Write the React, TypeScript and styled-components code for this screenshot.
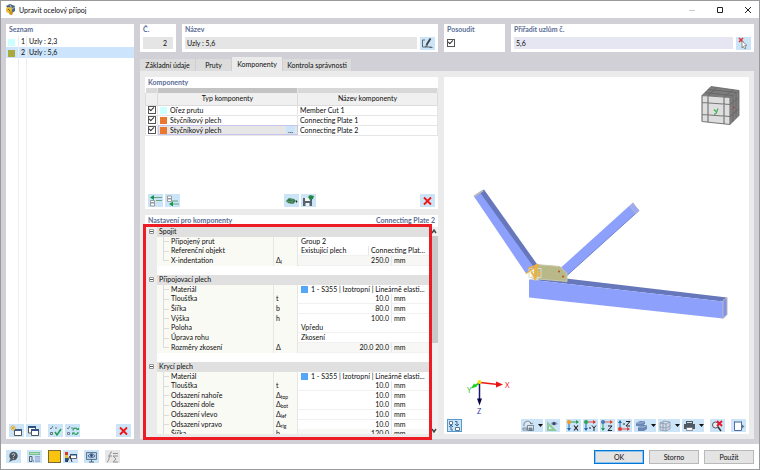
import React from "react";
import styled, { createGlobalStyle, css } from "styled-components";

const GlobalStyle = createGlobalStyle`
  *, *::before, *::after { box-sizing: border-box; }
  html, body, #root { height: 100%; }
  body {
    margin: 0;
    font-family: Lato, "Open Sans", "Noto Sans", sans-serif;
    font-size: 7px;
    line-height: 9px;
    color: #0c0c0c;
    background: #fff;
  }
  button, input { font: inherit; color: inherit; }
`;

const Window = styled.div`
  display: flex;
  flex-direction: column;
  min-height: 100vh;
  border: 1px solid #9a9a9c;
  background: #fff;
`;

const TitleBar = styled.header`
  display: flex;
  align-items: center;
  height: 17px;
  padding: 0 7px 0 4px;
  gap: 3px;
`;

const Title = styled.h1`
  flex: 1;
  margin: 0;
  font-size: 7px;
  font-weight: 400;
  line-height: 12px;
`;

const WindowControls = styled.div`
  display: flex;
  gap: 20px;
`;

const WindowButton = styled.button`
  display: flex;
  width: 8px;
  height: 8px;
  padding: 0;
  border: 0;
  background: none;
`;

const Body = styled.div`
  display: flex;
  flex: 1;
  gap: 6px;
  padding: 6px 5px 5px;
  background: #d1d0d6;
`;

const Panel = styled.section`
  display: flex;
  flex-direction: column;
  min-width: 0;
  background: #fff;
`;

const Sidebar = styled(Panel)`
  flex: 0 0 128px;
`;

const Heading = styled.h2`
  display: flex;
  justify-content: space-between;
  margin: 0;
  padding: 1px 3px;
  font-size: 7px;
  font-weight: 700;
  line-height: 9px;
  color: #5a6c95;
`;

const NodeTable = styled.table`
  width: 100%;
  margin-top: 1px;
  table-layout: fixed;
  border-spacing: 0;
`;

const NodeRow = styled.tr<{ $selected?: boolean }>`
  height: 11px;
  background: ${(p) => (p.$selected ? "#cce5fd" : "#fff")};
`;

const NodeCell = styled.td<{ $width?: number; $right?: boolean }>`
  width: ${(p) => (p.$width ? `${p.$width}px` : "auto")};
  padding: 0 ${(p) => (p.$right ? 1 : 2)}px;
  border-right: ${(p) => (p.$width ? "1px solid #eeeef0" : "0")};
  text-align: ${(p) => (p.$right ? "right" : "left")};
  white-space: nowrap;
`;

const ColumnGuides = styled.div`
  display: grid;
  flex: 1;
  grid-template-columns: 13px 8px 1fr;
`;

const Guide = styled.span`
  border-right: 1px solid #eeeef0;
  &:last-child { border: 0; }
`;

const Swatch = styled.span<{ $color: string }>`
  display: inline-block;
  flex: none;
  width: 7px;
  height: 7px;
  background: ${(p) => p.$color};
  vertical-align: middle;
`;

const Toolbar = styled.div`
  display: flex;
  align-items: center;
  gap: 2px;
  padding: 2px 3px;
`;

const Spacer = styled.span<{ $width?: number }>`
  flex: ${(p) => (p.$width ? `0 0 ${p.$width}px` : "1")};
`;

const ToolButton = styled.button<{ $pressed?: boolean; $disabled?: boolean; $menu?: boolean }>`
  display: flex;
  flex: none;
  align-items: center;
  justify-content: center;
  width: ${(p) => (p.$menu ? 22 : 15)}px;
  height: 13px;
  padding: 0;
  gap: 3px;
  border: ${(p) => (p.$pressed ? "1px solid #5599cc" : "0")};
  background: ${(p) => (p.$disabled ? "#e7e7e7" : "#cce4f7")};
`;

const Main = styled.main`
  display: flex;
  flex: 1;
  flex-direction: column;
  min-width: 0;
`;

const Fields = styled.div`
  display: grid;
  grid-template-columns: 36px 256fr 61px 243fr;
  gap: 6px;
`;

const Field = styled(Panel)`
  height: 28px;
`;

const FieldLabel = styled.label`
  padding: 1px 3px;
  font-weight: 700;
  color: #5a6c95;
`;

const FieldRow = styled.div`
  display: flex;
  align-items: center;
  gap: 3px;
  height: 14px;
  margin-top: 1px;
  padding: 0 3px;
`;

const TextInput = styled.input<{ $tint?: boolean; $right?: boolean }>`
  flex: 1;
  min-width: 0;
  width: 100%;
  height: 12px;
  padding: 0 ${(p) => (p.$right ? 6 : 2)}px;
  border: 0;
  background: ${(p) => (p.$tint ? "#e6e6f2" : "#e5e5e5")};
  text-align: ${(p) => (p.$right ? "right" : "left")};
`;

const Check = styled.input`
  appearance: none;
  display: block;
  width: 8px;
  height: 8px;
  margin: 0;
  border: 1px solid #555;
  background: #fff;
  &:checked::after {
    content: "";
    display: block;
    width: 5px;
    height: 3px;
    border: solid #333;
    border-width: 0 0 1px 1px;
    transform: rotate(-45deg);
  }
`;

const Tabs = styled.div`
  display: flex;
  align-items: flex-end;
  height: 19px;
`;

const Tab = styled.button<{ $active?: boolean; $width: number }>`
  width: ${(p) => p.$width}px;
  height: ${(p) => (p.$active ? 14 : 12)}px;
  padding: 0;
  border: 0;
  border-right: 1px solid #cfcfcf;
  background: ${(p) => (p.$active ? "#ebebeb" : "#dcdcdc")};
  white-space: nowrap;
`;

const TabPage = styled.div`
  display: grid;
  flex: 1;
  grid-template-columns: 293fr 305fr;
  gap: 6px;
  padding: 6px 5px 5px;
  background: #ebebeb;
`;

const LeftColumn = styled.div`
  display: flex;
  flex-direction: column;
  gap: 6px;
  min-width: 0;
`;

const ComponentsPanel = styled(Panel)`
  height: 132px;
`;

const ComponentTable = styled.table`
  width: 100%;
  table-layout: fixed;
  border-collapse: collapse;
`;

const HeadStrip = styled.th<{ $dark?: boolean; $width?: number }>`
  width: ${(p) => (p.$width ? `${p.$width}px` : "auto")};
  height: 5px;
  padding: 0;
  border-right: 1px solid #e6e6e6;
  background: ${(p) => (p.$dark ? "#c4c4c4" : "#d8d8d8")};
`;

const HeadCell = styled.th`
  height: 12px;
  padding: 0;
  border: 1px solid #dcdcdc;
  border-top: 0;
  background: #f0f0f0;
  font-weight: 400;
`;

const ComponentBody = styled.tbody`
  tr { height: 10px; }
  td { height: 10px; padding: 0 2px; line-height: 8px; border: 1px solid #e6e6e6; white-space: nowrap; }
`;

const TypeCell = styled.td<{ $selected?: boolean }>`
  ${(p) => p.$selected && css`background: #e6e6e6; outline: 1px solid #c9c4ea; outline-offset: -1px;`}
`;

const TypeContent = styled.div`
  display: flex;
  align-items: center;
  gap: 3px;
`;

const MoreButton = styled.button`
  width: 9px;
  height: 8px;
  margin-left: auto;
  padding: 0;
  border: 0;
  line-height: 4px;
  background: #cce4f7;
`;

const SettingsPanel = styled(Panel)`
  position: relative;
  flex: 1;
`;

const Highlight = styled.div`
  position: absolute;
  inset: 9px 6px -6px -2px;
  border: 3px solid #ed1c24;
  pointer-events: none;
`;

const SettingsView = styled.div`
  display: grid;
  flex: 1 1 0;
  grid-template-columns: 1fr 8px;
  height: 208px;
  margin-top: 1px;
  overflow: hidden;
`;

const SettingsScroll = styled.div`
  height: 208px;
  overflow: hidden;
`;

const PropertyTable = styled.table`
  display: block;
  height: 212px;
`;

const PropertyBody = styled.tbody`
  display: grid;
  grid-template-rows: repeat(22, 1fr);
  height: 100%;
`;

const PropertyRow = styled.tr<{ $group?: boolean }>`
  display: grid;
  grid-template-columns: ${(p) => (p.$group ? "12px 1fr" : "12px 117px 24px 1fr")};
  min-height: 0;
`;

const GutterCell = styled.td`
  display: flex;
  align-items: center;
  justify-content: center;
  padding: 0;
  background: #ebebeb;
`;

const GroupCell = styled.th`
  padding: 0 2px;
  font-weight: 400;
  text-align: left;
  background: #e0e0e0;
`;

const LabelCell = styled.th<{ $last?: boolean }>`
  display: flex;
  padding: 0 0 0 6px;
  gap: 2px;
  font-weight: 400;
  white-space: nowrap;
  border-right: 1px solid #e6e6e6;
  background: #fafaf5;
  &::before {
    content: "";
    width: 6px;
    height: ${(p) => (p.$last ? "50%" : "100%")};
    border-left: 1px solid #dcdcdc;
    background: linear-gradient(#dcdcdc, #dcdcdc) 0 ${(p) => (p.$last ? "100%" : "50%")} / 6px 1px no-repeat;
  }
`;

const SymbolCell = styled.td`
  padding: 0 2px;
  border-right: 1px solid #e6e6e6;
  background: #fafaf5;
  white-space: nowrap;
`;

const Sub = styled.sub`
  font-size: 5px;
  line-height: 1px;
  vertical-align: -1px;
`;

const ValueCell = styled.td<{ $columns?: string; $shade?: boolean }>`
  display: grid;
  grid-template-columns: ${(p) => p.$columns ?? "1fr"};
  min-width: 0;
  padding: 0 0 0 1px;
  border-bottom: 1px solid #f1f1f1;
  background: ${(p) => (p.$shade ? "#f7f7f5" : "#fff")};
`;

const ValuePart = styled.span<{ $right?: boolean; $unit?: boolean }>`
  padding: 0 2px;
  overflow: hidden;
  text-overflow: ellipsis;
  text-align: ${(p) => (p.$right ? "right" : "left")};
  white-space: nowrap;
  border-left: ${(p) => (p.$unit ? "1px solid #e6e6e6" : "0")};
`;

const MaterialValue = styled.span`
  display: flex;
  align-items: center;
  gap: 3px;
  padding: 0 2px;
  white-space: nowrap;
`;

const ScrollBar = styled.div`
  display: flex;
  flex-direction: column;
  justify-content: space-between;
  align-items: flex-end;
  background: #f0f0f0;
`;

const ScrollThumb = styled.div`
  width: 6px;
  height: 107px;
  margin-bottom: auto;
  background: #c9c9c9;
`;

const Viewer = styled(Panel)``;

const Scene = styled.svg`
  display: block;
  flex: 1 1 0;
  width: 100%;
  min-height: 0;
`;

const Footer = styled.footer`
  display: flex;
  align-items: center;
  gap: 5px;
  height: 25px;
  padding: 0 5px;
`;

const IconStrip = styled.div`
  display: flex;
  flex: 1;
  gap: 2px;
`;

const ColorButton = styled.button`
  width: 13px;
  height: 13px;
  padding: 0;
  border: 1px solid #75683a;
  background: #f9c30e;
`;

const DialogButton = styled.button<{ $primary?: boolean }>`
  width: 50px;
  height: 14px;
  padding: 0;
  border: 1px solid ${(p) => (p.$primary ? "#0078d7" : "#b9b9b9")};
  outline: ${(p) => (p.$primary ? "1px solid #8dc0ea" : "0")};
  outline-offset: -2px;
  background: #e4e4e4;
  line-height: 10px;
`;

const iconShapes = {
  edit: <g fill="none" stroke="#5b6870"><path d="M4 3H1.500v7h9M8.500 10.500h3" /><path d="M9.500 1.500 5.500 8" stroke="#3b4147" strokeWidth="1.800" /><path d="m4.500 10 1-2 1 .8Z" /></g>,
  pick: <g><path d="m2 1 4 4M6 1 2 5" stroke="#e23434" strokeWidth="1.500" /><path d="m5 4 5 4.500-2.400.2 1.400 2.500-1.500.6-1.200-2.500L5 11Z" fill="#fff" stroke="#777" strokeWidth=".8" /></g>,
  newItem: <g><path d="M4.500 4.500h7v6h-7z" fill="#fff" stroke="#555" /><path d="M4 4h8v2H4z" fill="#3f608b" /><path d="M3 0v6M0 3h6M1 1l4 4M5 1 1 5" stroke="#e0b23b" /></g>,
  copyItem: <g fill="#fff" stroke="#555"><path d="M1.500 2v6h7V2Z" /><path d="M1 2h8" stroke="#31547e" strokeWidth="2" /><path d="M4.500 5v5.500h7V5Z" /><path d="M4 5h8" stroke="#31547e" strokeWidth="2" /></g>,
  checkAll: <g fill="none" stroke="#555" strokeWidth=".8"><path d="m1 3 1 1 2-3M1.500 7.500h2v2h-2zM6 3h2" /><path d="m6 7 2 3 4-6" stroke="#1a9e50" strokeWidth="1.500" /></g>,
  checkSwap: <g fill="none" stroke="#667" strokeWidth=".8"><path d="m1 3 1 1 2-3M1.500 7.500h2v2h-2zM5 3h2" /><path d="M7 5.500c0-3 4-3 4.500-.5M12 7c0 3-4 3-4.500.5" stroke="#2ba35c" strokeWidth="1.200" /><path d="M10 5h3V2.500ZM9 7.500H6V10Z" fill="#2ba35c" stroke="none" /></g>,
  remove: <path d="m3 2.500 7 7M10 2.500l-7 7" stroke="#ed1515" strokeWidth="1.800" />,
  insertAbove: <g><path d="M5 2.500h8M7 5.500h6" stroke="#66a782" /><path d="m1 2.500 4-2.500v5Z" fill="#16944c" /><path d="M1.500 5.500h4v2h-4zM1.500 8h4v3h-4z" fill="#fff" stroke="#888" strokeWidth=".8" /></g>,
  insertBelow: <g><path d="M7 9h6M6 6h6" stroke="#66a782" /><path d="m3 9 4-2.500v5Z" fill="#16944c" /><path d="M1.500 1h4v2.500h-4zM1.500 4h4v2.500h-4z" fill="#fff" stroke="#888" strokeWidth=".8" /></g>,
  component: <g><path d="m1 6 3-3 5 1 2 2-3 3-5-1Z" fill="#39734b" /><path d="m4 3 4 2-1 4M1 6l6 1" stroke="#68b17d" strokeWidth=".7" fill="none" /><path d="m11 5 1.500 1.500L11 8Z" fill="#222" /></g>,
  saveComponent: <g><path d="M1 3h9v8H1Z" fill="#59636b" /><path d="M3 3h5v3H3zM3.500 8h4v3h-4z" fill="#eef5fa" /><path d="m6 2 2-2 4 1-1 3-3 1Z" fill="#248747" /></g>,
  help: <g><circle cx="6.500" cy="5" r="4.200" fill="#4e565d" /><path d="M3.500 8 2 11l4-2" fill="#4e565d" /><path d="M5 4c.2-2 3.200-1.500 2.800 0-.3 1-1.500 1-1.500 2.200m0 1v1" fill="none" stroke="#d7e7f3" strokeWidth=".9" /></g>,
  units: <g><path d="M1 1h11v3H1z" fill="#77c58d" /><path d="M2 2.500h9" stroke="#b6debf" /><path d="M7 5h5v6H7z" fill="#9caddb" /><path d="M7 7h5M7 9h5" stroke="#d5dcf0" strokeWidth=".8" /><path d="M1.500 5.500h2.500v5H1.500zM5.500 9.500v1" stroke="#52606c" fill="none" /></g>,
  colors: <g><path d="M1 1h3v3H1z" fill="#d4372c" /><path d="M1 4h3v3H1z" fill="#efbd2e" /><path d="M1 7h3v4H1z" fill="#275184" /><path d="M6.500 3.500h6v4h-6z" fill="#fff" stroke="#667" /><path d="M6 3h7v1.500H6z" fill="#31547e" /><path d="m3 11 3-6 2 6" stroke="#333" fill="none" /></g>,
  monitor: <g><path d="M1.500 1.500h10v7h-10z" fill="#b9d3ec" stroke="#60798e" /><path d="M3 5c2-3 5-3 7 0-2 2-5 2-7 0M4 11h5M6.500 8v3" fill="none" stroke="#496580" /><circle cx="6.500" cy="4.500" r="1.400" fill="#294d78" /></g>,
  formula: <g fill="none" stroke="#929292"><path d="M6 1C3 0 4 10 1 11M2 5h4M7 2.500h5M12 5H7l3 3-3 3h5" /></g>,
  views: <g><path d="M1.500 1.500h3v3h-3zM7.500 7.500h4v3h-4z" fill="#fff" stroke="#5a7993" /><path d="M7 1.500h2v4M5 10H3V6M7 4l2 2 2-2M1 7l2-2 2 2" fill="none" stroke="#336a9c" /></g>,
  rotateView: <g fill="#dfe6ee" stroke="#657483" strokeWidth=".8"><path d="M2 6C1 0 9 0 9 4M8 2l1 2 2-1M1 8h4v2H1zM5.500 5.500h6v5h-6z" /><path d="M7 8h3v2.500h-3z" fill="#798da0" /></g>,
  measure: <g><path d="M1 1v10h10Z" fill="#8dcb98" /><path d="M3 6v3h3Z" fill="#e4f2e9" /><path d="M4.500 3.500C6 1 10 1 12 3.500 10 6 6 6 4.500 3.500" fill="#9daac5" /><circle cx="8" cy="3.500" r="1.600" fill="#34436d" /></g>,
  axisX: <g><path d="M2 2v8" stroke="#2169ad" /><path d="M2 2h9" stroke="#30a45b" /><circle cx="2" cy="2" r="2" fill="#ef9e22" /><path d="m9 0 3 2-3 2Z" fill="#239b52" /><path d="M0 8h4l-2 3Z" fill="#2169ad" /><path d="m7 5.500 4 5M11 5.500l-4 5" stroke="#222" strokeWidth="1.200" /></g>,
  axisY: <g><path d="M2 2v8" stroke="#2169ad" /><path d="M2 2h9" stroke="#de4b3e" /><circle cx="2" cy="2" r="2" fill="#2da455" /><path d="m9 0 3 2-3 2Z" fill="#dc392f" /><path d="M0 8h4l-2 3Z" fill="#2169ad" /><path d="M5 8h2m1-2.500 2 2.500 2-2.500m-2 2.500v3" stroke="#222" fill="none" /></g>,
  axisZ: <g><path d="M2 2v8" stroke="#30a45b" /><path d="M2 2h9" stroke="#de6944" /><circle cx="2" cy="2" r="2" fill="#4b79ba" /><path d="m9 0 3 2-3 2Z" fill="#df4939" /><path d="M0 8h4l-2 3Z" fill="#239b52" /><path d="M7 6h4l-4 4.500h4" stroke="#222" fill="none" /></g>,
  axisZneg: <g><path d="M2 9V2" stroke="#2169ad" /><path d="M2 9h9" stroke="#de4b3e" /><circle cx="2" cy="9" r="2" fill="#e33e34" /><path d="m9 7 3 2-3 2Z" fill="#e33e34" /><path d="m0 3 2-3 2 3Z" fill="#2169ad" /><path d="M5 4h2m1-2.500h4L8 6h4" stroke="#222" fill="none" /></g>,
  surface: <g><path d="m1 3 4-2h5v3l-3 2H1ZM3 7l4-2h5v4l-3 2H3Z" fill="#6d87b5" /><path d="m1 3h6l3-2M3 7h6l3-2" stroke="#a3bbda" fill="none" /></g>,
  box: <g fill="#d1d7e3" stroke="#8995a8" strokeWidth=".8"><path d="m1 3 4-2 6 1v7l-4 2-6-1Zm0 0 6 1 4-2M7 4v7M4 2v8M1 7l6 1 4-2" /></g>,
  print: <g><path d="M3 1h7v4H3zM1 4h11v5H1z" fill="#4e5961" /><path d="M3.500 7.500h6v3h-6z" fill="#fff" stroke="#667" strokeWidth=".7" /><path d="M4 2.500h5" stroke="#cfdae1" /></g>,
  clear: <g><circle cx="4.500" cy="5" r="3" fill="#e7edf1" stroke="#555" /><path d="m7 7 3 4" stroke="#333" strokeWidth="1.500" /><path d="m6 1 5 5m0-5L6 6" stroke="#e7192c" strokeWidth="1.800" /></g>,
  exportPage: <g><path d="M2.500 1.500h7v9h-7z" fill="#fff" stroke="#536bad" /><path d="M3 2h6" stroke="#95abc4" strokeWidth="2" /><path d="m9.500 4 3 2.500-3 2.500Z" fill="#5e7892" /></g>,
};

type IconName = keyof typeof iconShapes;

const Icon = ({ name }: { name: IconName }) => (
  <svg width="13" height="12" viewBox="0 0 13 12" fill="none" aria-hidden="true">{iconShapes[name]}</svg>
);

const Caret = () => (
  <svg width="5" height="3" viewBox="0 0 5 3" aria-hidden="true"><path d="M0 0h5L2.500 3Z" fill="#111" /></svg>
);

const Tool = ({ icon, label, menu, pressed, disabled }: { icon: IconName; label: string; menu?: boolean; pressed?: boolean; disabled?: boolean }) => (
  <ToolButton type="button" aria-label={label} $menu={menu} $pressed={pressed} $disabled={disabled} disabled={disabled}>
    <Icon name={icon} />{menu && <Caret />}
  </ToolButton>
);

type Property = {
  label: string;
  symbol?: string;
  sub?: string;
  value: string;
  unit?: string;
  second?: string;
  material?: boolean;
  shade?: boolean;
};

const steel = { label: "Materiál", value: "1 - S355 | Izotropní | Lineárně elasti...", material: true };

const groups: { name: string; rows: Property[] }[] = [
  { name: "Spojit", rows: [
    { label: "Připojený prut", value: "Group 2" },
    { label: "Referenční objekt", value: "Existující plech", second: "Connecting Plat..." },
    { label: "X-indentation", symbol: "Δ", sub: "i", value: "250.0", unit: "mm", shade: true },
  ] },
  { name: "Připojovací plech", rows: [
    steel,
    { label: "Tloušťka", symbol: "t", value: "10.0", unit: "mm" },
    { label: "Šířka", symbol: "b", value: "80.0", unit: "mm" },
    { label: "Výška", symbol: "h", value: "100.0", unit: "mm" },
    { label: "Poloha", value: "Vpředu" },
    { label: "Úprava rohu", value: "Zkosení" },
    { label: "Rozměry zkosení", symbol: "Δ", value: "20.0 20.0", unit: "mm", shade: true },
  ] },
  { name: "Krycí plech", rows: [
    steel,
    { label: "Tloušťka", symbol: "t", value: "10.0", unit: "mm" },
    { label: "Odsazení nahoře", symbol: "Δ", sub: "top", value: "10.0", unit: "mm" },
    { label: "Odsazení dole", symbol: "Δ", sub: "bot", value: "10.0", unit: "mm" },
    { label: "Odsazení vlevo", symbol: "Δ", sub: "lef", value: "10.0", unit: "mm" },
    { label: "Odsazení vpravo", symbol: "Δ", sub: "rig", value: "10.0", unit: "mm" },
    { label: "Šířka", symbol: "b", value: "120.0", unit: "mm", shade: true },
  ] },
];

const PropertyValue = ({ row }: { row: Property }) => {
  if (row.material) {
    return <ValueCell><MaterialValue><Swatch $color="#53a6f8" />{row.value}</MaterialValue></ValueCell>;
  }
  if (row.unit) {
    return (
      <ValueCell $columns="1fr 39px" $shade={row.shade}>
        <ValuePart $right>{row.value}</ValuePart><ValuePart $unit>{row.unit}</ValuePart>
      </ValueCell>
    );
  }
  if (row.second) {
    return <ValueCell $columns="1fr 62px"><ValuePart>{row.value}</ValuePart><ValuePart $unit>{row.second}</ValuePart></ValueCell>;
  }
  return <ValueCell><ValuePart>{row.value}</ValuePart></ValueCell>;
};

const Minus = () => (
  <svg width="5" height="5" viewBox="0 0 5 5" aria-hidden="true">
    <path d="M.5.500h4v4h-4z" fill="#fff" stroke="#999" /><path d="M1 2.500h3" stroke="#555" />
  </svg>
);

const Settings = () => (
  <PropertyTable>
    <PropertyBody>
      {groups.map((group, g) => (
        <React.Fragment key={group.name}>
          <PropertyRow $group><GutterCell><Minus /></GutterCell><GroupCell>{group.name}</GroupCell></PropertyRow>
          {group.rows.map((row, i) => (
            <PropertyRow key={row.label}>
              <GutterCell />
              <LabelCell $last={g < 2 && i === group.rows.length - 1}>{row.label}</LabelCell>
              <SymbolCell>{row.symbol}{row.sub && <Sub>{row.sub}</Sub>}</SymbolCell>
              <PropertyValue row={row} />
            </PropertyRow>
          ))}
          {g < 2 && <PropertyRow $group><GutterCell /><td /></PropertyRow>}
        </React.Fragment>
      ))}
    </PropertyBody>
  </PropertyTable>
);

const components = [
  { color: "#ccffff", type: "Ořez prutu", name: "Member Cut 1" },
  { color: "#e97730", type: "Styčníkový plech", name: "Connecting Plate 1" },
  { color: "#e97730", type: "Styčníkový plech", name: "Connecting Plate 2", selected: true },
];

const Model = () => (
  <Scene viewBox="444 77 305 339" role="img" aria-label="3D model">
    <g strokeLinejoin="round">
      <path d="m474 196 9-6 54 76-11 7Z" fill="#8da1fc" />
      <path d="m480 192 4-3 54 76-4 2Z" fill="#6677bc" />
      <path d="m474 196 9-6" stroke="#b9b9b9" strokeWidth="2" />
      <path d="m561 267 72-65 6 8-72 65Z" fill="#8da1fc" />
      <path d="m567 275 72-65" stroke="#7082d1" />
      <path d="m633 203 6 7-3 3-6-7Z" fill="#99aafb" stroke="#b9b9bf" />
      <path d="m529 279 37-1 161 19-4 4Z" fill="#6677bc" />
      <path d="m529 279 194 22v17l-194-21Z" fill="#8da1fc" />
      <path d="m723 300 4-3v17l-4 4Z" fill="#8092e6" stroke="#b9b9bd" />
      <path d="m536 264 24 2 7 7v8l-34-3Z" fill="#b9b888" stroke="#c9c9ac" />
      <circle cx="559" cy="271" r="1" fill="#b84b17" /><circle cx="563" cy="276" r="1" fill="#b84b17" />
      <path d="M529 268h12v9h-12zM532 271h6v8h-6z" fill="none" stroke="#dedbc5" />
      <path d="m528 268 10-4-2 7 4 2-5 4-4-6M526 273l9-6v13" fill="none" stroke="#edb13a" strokeWidth="1.500" />
    </g>
    <g strokeLinejoin="round">
      <path d="m702 95 9-9 28 4-9 7Z" fill="#7d7d7d" /><path d="m730 97 9-7v25l-9 9Z" fill="#827f7f" />
      <path d="m702 95 28 2v27l-28-3Z" fill="#dedede" />
      <path d="M702 95v26M708 96v26M724 97v26M730 97v27M702 95l28 2M702 102l28 2M702 114l28 2M702 121l28 3" stroke="#777" strokeWidth="1.200" />
      <path d="m705 92 28 3M708 89l28 3M708 95l9-8M724 97l9-8M733 95v26M736 92v25M730 104l9-7M730 116l9-8M702 95l9-9 28 4-9 7M739 90v25l-9 9" fill="none" stroke="#626262" strokeWidth=".8" />
      <path d="m714 109 2 2m2-3-2 5-2 1" fill="none" stroke="#42ad50" strokeWidth="1.200" />
      <circle cx="734" cy="107" r="1" fill="#9b4d4d" />
    </g>
    <path d="m480 382 18 2" stroke="#ef1717" strokeWidth="1.500" /><path d="m496 381 7 3-7 3Z" fill="#e11" />
    <path d="m480 382-6 4" stroke="#15d21d" strokeWidth="2" /><path d="m471 388 3-5 3 3Z" fill="#15d21d" />
    <path d="M479.500 382v17" stroke="#17176d" strokeWidth="1.500" /><path d="M477 398h5l-2.500 7Z" fill="#070747" />
    <circle cx="479.500" cy="381.500" r="2" fill="#f4df12" />
    <text x="505" y="387" fontSize="7" fill="#f02020">X</text>
    <text x="467" y="392" fontSize="7" fill="#20b52a">Y</text>
    <text x="477" y="413" fontSize="7" fill="#343497">Z</text>
  </Scene>
);

const AppLogo = () => (
  <svg width="11" height="11" viewBox="0 0 11 11" aria-hidden="true">
    <path d="m1 2 4-2 5 2v5L7 9 3 5Z" fill="#4e6681" /><path d="m5 1 2 4 3-2" stroke="#a8bdcb" fill="none" />
    <circle cx="4" cy="6" r="3" fill="#e7ba31" /><circle cx="6" cy="9" r="2" fill="#cc9720" /><path d="m3 5 2 2" stroke="#775e2d" />
  </svg>
);

export default function App() {
  return (
    <Window>
      <GlobalStyle />
      <TitleBar>
        <AppLogo />
        <Title>Upravit ocelový přípoj</Title>
        <WindowControls>
          <WindowButton type="button" aria-label="Minimize"><svg width="8" height="8"><path d="M1 4.500h6" stroke="#ccc" /></svg></WindowButton>
          <WindowButton type="button" aria-label="Maximize"><svg width="8" height="8"><path d="M1.500 1.500h5v5h-5z" fill="none" stroke="#222" /></svg></WindowButton>
          <WindowButton type="button" aria-label="Close"><svg width="8" height="8"><path d="m1 1 6 6m0-6L1 7" stroke="#222" /></svg></WindowButton>
        </WindowControls>
      </TitleBar>

      <Body>
        <Sidebar>
          <Heading>Seznam</Heading>
          <NodeTable>
            <tbody>
              <NodeRow><NodeCell $width={13}><Swatch $color="#ccffff" /></NodeCell><NodeCell $width={8} $right>1</NodeCell><NodeCell>Uzly : 2,3</NodeCell></NodeRow>
              <NodeRow $selected><NodeCell $width={13}><Swatch $color="#a9a93d" /></NodeCell><NodeCell $width={8} $right>2</NodeCell><NodeCell>Uzly : 5,6</NodeCell></NodeRow>
            </tbody>
          </NodeTable>
          <ColumnGuides><Guide /><Guide /><Guide /></ColumnGuides>
          <Toolbar>
            <Tool icon="newItem" label="Nový" /><Tool icon="copyItem" label="Kopírovat" /><Spacer $width={3} />
            <Tool icon="checkAll" label="Vybrat vše" /><Tool icon="checkSwap" label="Obrátit výběr" /><Spacer />
            <Tool icon="remove" label="Smazat" />
          </Toolbar>
        </Sidebar>

        <Main>
          <Fields>
            <Field><FieldLabel htmlFor="number">Č.</FieldLabel><FieldRow><TextInput id="number" defaultValue="2" $right /></FieldRow></Field>
            <Field><FieldLabel htmlFor="name">Název</FieldLabel><FieldRow><TextInput id="name" defaultValue="Uzly : 5,6" /><Tool icon="edit" label="Upravit název" /></FieldRow></Field>
            <Field><FieldLabel htmlFor="design">Posoudit</FieldLabel><FieldRow><Check id="design" type="checkbox" defaultChecked /></FieldRow></Field>
            <Field><FieldLabel htmlFor="nodes">Přiřadit uzlům č.</FieldLabel><FieldRow><TextInput id="nodes" defaultValue="5,6" $tint /><Tool icon="pick" label="Vybrat uzly" /></FieldRow></Field>
          </Fields>

          <Tabs role="tablist">
            <Tab type="button" role="tab" $width={56}>Základní údaje</Tab>
            <Tab type="button" role="tab" $width={36}>Pruty</Tab>
            <Tab type="button" role="tab" aria-selected $width={51} $active>Komponenty</Tab>
            <Tab type="button" role="tab" $width={69}>Kontrola správnosti</Tab>
          </Tabs>

          <TabPage>
            <LeftColumn>
              <ComponentsPanel>
                <Heading>Komponenty</Heading>
                <ComponentTable>
                  <thead>
                    <tr><HeadStrip $width={12} /><HeadStrip $dark /><HeadStrip /></tr>
                    <tr><HeadCell /><HeadCell>Typ komponenty</HeadCell><HeadCell>Název komponenty</HeadCell></tr>
                  </thead>
                  <ComponentBody>
                    {components.map((c) => (
                      <tr key={c.name}>
                        <td><Check type="checkbox" defaultChecked aria-label={c.name} /></td>
                        <TypeCell $selected={c.selected}>
                          <TypeContent><Swatch $color={c.color} />{c.type}{c.selected && <MoreButton type="button">...</MoreButton>}</TypeContent>
                        </TypeCell>
                        <td>{c.name}</td>
                      </tr>
                    ))}
                  </ComponentBody>
                </ComponentTable>
                <Spacer />
                <Toolbar>
                  <Tool icon="insertAbove" label="Vložit nad" /><Tool icon="insertBelow" label="Vložit pod" /><Spacer />
                  <Tool icon="component" label="Knihovna" /><Tool icon="saveComponent" label="Uložit" /><Spacer />
                  <Tool icon="remove" label="Smazat" />
                </Toolbar>
              </ComponentsPanel>

              <SettingsPanel>
                <Heading><span>Nastavení pro komponenty</span><span>Connecting Plate 2</span></Heading>
                <SettingsView>
                  <SettingsScroll><Settings /></SettingsScroll>
                  <ScrollBar>
                    <svg width="7" height="9" viewBox="0 0 7 9" aria-hidden="true"><path d="m1 6 2-3 2 3" fill="none" stroke="#444" strokeWidth="1.500" /></svg>
                    <ScrollThumb />
                    <svg width="7" height="9" viewBox="0 0 7 9" aria-hidden="true"><path d="m1 3 2 3 2-3" fill="none" stroke="#444" strokeWidth="1.500" /></svg>
                  </ScrollBar>
                </SettingsView>
                <Highlight />
              </SettingsPanel>
            </LeftColumn>

            <Viewer>
              <Model />
              <Toolbar>
                <Tool icon="views" label="Zobrazení" pressed /><Spacer />
                <Tool icon="rotateView" label="Pohled" menu /><Tool icon="measure" label="Měření" /><Spacer $width={2} />
                <Tool icon="axisX" label="Ve směru X" /><Tool icon="axisY" label="Ve směru -Y" /><Tool icon="axisZ" label="Ve směru Z" /><Tool icon="axisZneg" label="Ve směru -Z" />
                <Tool icon="surface" label="Plochy" menu /><Tool icon="box" label="Tělesa" menu /><Tool icon="print" label="Tisk" menu /><Spacer $width={2} />
                <Tool icon="clear" label="Zrušit výběr" /><Spacer $width={2} /><Tool icon="exportPage" label="Nové okno" />
              </Toolbar>
            </Viewer>
          </TabPage>
        </Main>
      </Body>

      <Footer>
        <IconStrip>
          <Tool icon="help" label="Nápověda" /><Spacer $width={2} /><Tool icon="units" label="Jednotky" /><Spacer $width={2} />
          <ColorButton type="button" aria-label="Barva" /><Tool icon="colors" label="Barvy" /><Spacer $width={2} />
          <Tool icon="monitor" label="Zobrazit" /><Spacer $width={2} /><Tool icon="formula" label="Vzorce" disabled />
        </IconStrip>
        <DialogButton type="button" $primary>OK</DialogButton>
        <DialogButton type="button">Storno</DialogButton>
        <DialogButton type="button">Použít</DialogButton>
      </Footer>
    </Window>
  );
}
